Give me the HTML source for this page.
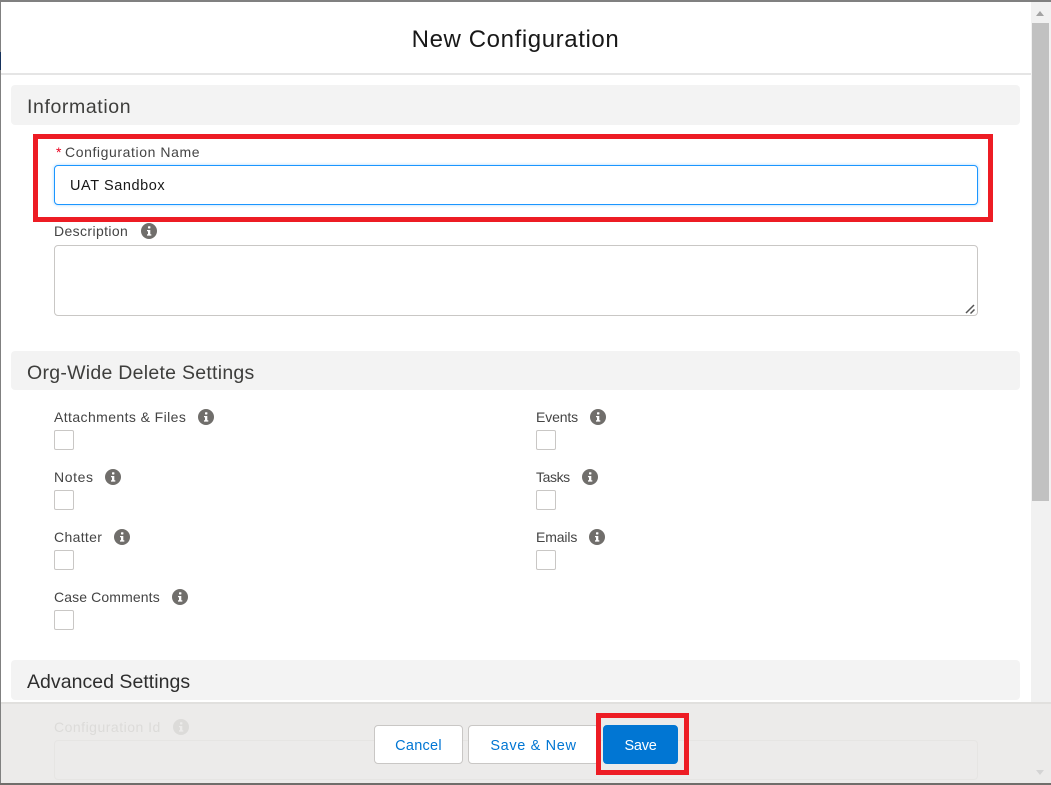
<!DOCTYPE html>
<html><head><meta charset="utf-8">
<style>
html,body{margin:0;padding:0;width:1051px;height:785px;overflow:hidden;background:#fff;font-family:"Liberation Sans",sans-serif;}
.a{position:absolute;}
.t{position:absolute;white-space:nowrap;line-height:20px;height:20px;}
.sec{position:absolute;left:11px;width:1009px;height:40px;background:#f3f3f3;border-radius:4px;}
.h{position:absolute;left:27px;font-size:19.5px;line-height:24px;color:#3e3e3c;white-space:nowrap;}
.l{position:absolute;font-size:14px;line-height:20px;color:#444;white-space:nowrap;}
.c{position:absolute;width:18px;height:18px;border:1px solid #c9c7c5;border-radius:2px;background:#fff;}
svg.i{position:absolute;width:16px;height:16px;}
.b{position:absolute;top:725px;height:37px;border:1px solid #c9c7c5;border-radius:4px;background:#fff;color:#0176d3;font-size:14.5px;line-height:40px;text-align:center;}
.r{position:absolute;border:5px solid #ed1c24;box-sizing:border-box;}
</style></head>
<body>
<svg width="0" height="0" style="position:absolute"><defs>
<symbol id="i" viewBox="0 0 16 16"><circle cx="8" cy="8" r="8" fill="currentColor"/><g style="fill:var(--f,#fff)"><rect x="7" y="3.2" width="2.4" height="2.3" rx=".6"/><path d="M6 7h3.3v4.3h1v1.3H6v-1.3h1V8.300H6z"/></g></symbol>
</defs></svg>

<div class="a" style="left:0;top:0;width:1051px;height:2px;background:#808080"></div>
<div class="a" style="left:0;top:0;width:1px;height:785px;background:#808080"></div>
<div class="a" style="left:0;top:52px;width:1px;height:18px;background:#16325c"></div>

<div class="t" style="left:0;width:1031px;top:26px;height:28px;line-height:28px;text-align:center;font-size:24px;color:#181818;letter-spacing:.6px">New Configuration</div>
<div class="a" style="left:1px;top:73px;width:1030px;height:2px;background:#e5e5e5"></div>

<!-- scrollbar -->
<div class="a" style="left:1031px;top:2px;width:20px;height:701px;background:#f1f1f1"></div>
<div class="a" style="left:1032px;top:23px;width:17px;height:478px;background:#c1c1c1"></div>
<div class="a" style="left:1036px;top:11px;width:0;height:0;border-left:4.500px solid transparent;border-right:4.500px solid transparent;border-bottom:5px solid #a3a3a3"></div>

<div class="sec" style="top:85px"></div>
<div class="h" style="top:95px;letter-spacing:.6px">Information</div>

<div class="t" style="left:56px;top:142px;font-size:14px;color:#ea001e">*</div>
<div class="l" style="left:65px;top:142px;letter-spacing:.59px">Configuration Name</div>
<div class="a" style="left:54px;top:165px;width:922px;height:38px;border:1px solid #1b96ff;border-radius:4px;box-shadow:0 0 3px #a9d6ff;background:#fff"></div>
<div class="t" style="left:70px;top:176px;font-size:14.500px;color:#181818;letter-spacing:.57px">UAT Sandbox</div>
<div class="r" style="left:33px;top:134px;width:960px;height:88px"></div>

<div class="l" style="left:54px;top:221px;letter-spacing:.38px">Description</div>
<svg class="i" style="left:141px;top:223px;color:#706e6b"><use href="#i"/></svg>
<div class="a" style="left:54px;top:245px;width:922px;height:69px;border:1px solid #c9c7c5;border-radius:4px;background:#fff"></div>
<svg class="a" style="left:964px;top:303px" width="12" height="12"><path d="M2 10L10 2M6.500 10.500L10.500 6.500" stroke="#555" stroke-width="1.500" fill="none"/></svg>

<div class="sec" style="top:351px;height:39px"></div>
<div class="h" style="top:361px;letter-spacing:.27px">Org-Wide Delete Settings</div>

<div class="l" style="left:54px;top:407px;letter-spacing:.41px">Attachments &amp; Files</div>
<svg class="i" style="left:198px;top:409px;color:#706e6b"><use href="#i"/></svg>
<div class="c" style="left:54px;top:430px"></div>
<div class="l" style="left:54px;top:467px;letter-spacing:.6px">Notes</div>
<svg class="i" style="left:105px;top:469px;color:#706e6b"><use href="#i"/></svg>
<div class="c" style="left:54px;top:490px"></div>
<div class="l" style="left:54px;top:527px;letter-spacing:.34px">Chatter</div>
<svg class="i" style="left:114px;top:529px;color:#706e6b"><use href="#i"/></svg>
<div class="c" style="left:54px;top:550px"></div>
<div class="l" style="left:54px;top:587px;letter-spacing:.12px">Case Comments</div>
<svg class="i" style="left:172px;top:589px;color:#706e6b"><use href="#i"/></svg>
<div class="c" style="left:54px;top:610px"></div>

<div class="l" style="left:536px;top:407px;letter-spacing:-.13px">Events</div>
<svg class="i" style="left:590px;top:409px;color:#706e6b"><use href="#i"/></svg>
<div class="c" style="left:536px;top:430px"></div>
<div class="l" style="left:536px;top:467px;letter-spacing:-.4px">Tasks</div>
<svg class="i" style="left:582px;top:469px;color:#706e6b"><use href="#i"/></svg>
<div class="c" style="left:536px;top:490px"></div>
<div class="l" style="left:536px;top:527px;letter-spacing:-.13px">Emails</div>
<svg class="i" style="left:589px;top:529px;color:#706e6b"><use href="#i"/></svg>
<div class="c" style="left:536px;top:550px"></div>

<div class="sec" style="top:660px"></div>
<div class="h" style="top:670px;color:#2e2e2e;letter-spacing:.03px">Advanced Settings</div>

<!-- footer -->
<div class="a" style="left:1px;top:702px;width:1050px;height:2px;background:#e1e0de"></div>
<div class="a" style="left:1px;top:704px;width:1050px;height:79px;background:#ecebea"></div>
<div class="a" style="left:0;top:783px;width:1051px;height:2px;background:#706e6b"></div>
<div class="l" style="left:54px;top:717px;color:#dcdbd9;letter-spacing:.5px">Configuration Id</div>
<svg class="i" style="left:173px;top:719px;color:#dcdbd9;--f:#ecebea"><use href="#i"/></svg>
<div class="a" style="left:54px;top:740px;width:922px;height:38px;border:1px solid #e6e5e3;border-radius:4px"></div>
<div class="a" style="left:1036px;top:770px;width:0;height:0;border-left:4.500px solid transparent;border-right:4.500px solid transparent;border-top:5px solid #d4d4d4"></div>

<div class="b" style="left:374px;width:87px;letter-spacing:.25px">Cancel</div>
<div class="b" style="left:468px;width:129px;letter-spacing:.65px">Save &amp; New</div>
<div class="b" style="left:603px;width:73px;background:#0176d3;border-color:#0176d3;color:#fff;letter-spacing:-.25px">Save</div>
<div class="r" style="left:596px;top:713px;width:93px;height:62px"></div>
</body></html>
